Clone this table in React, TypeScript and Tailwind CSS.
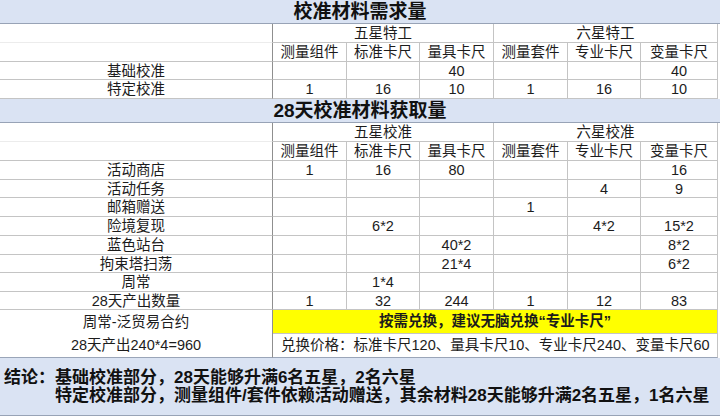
import React from "react";

const grid = "grid grid-cols-[273px_74px_73px_74px_74px_73px_77px] w-[718px]";
const line = "border-[#c4c4c4]";

type Val = string;

function Band({ title }: { title: string }) {
  return (
    <div className="h-[24px] bg-[#dae3f3] border-b border-[#98a3b6] flex items-center justify-center text-[19px] font-bold text-[#111] leading-none">
      {title}
    </div>
  );
}

function Cell({ children, className = "" }: { children?: React.ReactNode; className?: string }) {
  return (
    <div className={`flex items-center justify-center border-r border-b ${line} pt-[1px] ${className}`}>
      {children}
    </div>
  );
}

function Row({ label, vals, h = "h-[19px]" }: { label: string; vals: Val[]; h?: string }) {
  return (
    <div className={`${grid} ${h}`}>
      <Cell className="border-r-[#8f8f8f]">{label}</Cell>
      {vals.map((v, i) => (
        <Cell key={i}>{v}</Cell>
      ))}
    </div>
  );
}

function GroupHeader({ left, right }: { left: string; right: string }) {
  return (
    <>
      <div className={`${grid} h-[19px]`}>
        <div className="border-r border-b border-r-[#8f8f8f] border-b-[#ececec]" />
        <Cell className="col-span-3">{left}</Cell>
        <Cell className="col-span-3">{right}</Cell>
      </div>
      <Row label="" vals={["测量组件", "标准卡尺", "量具卡尺", "测量套件", "专业卡尺", "变量卡尺"]} />
    </>
  );
}

export default function App() {
  return (
    <div className="w-[720px] h-[419px] bg-white text-[#1c1c1c] text-[14.5px] leading-none font-['Liberation_Sans','Noto_Sans_CJK_SC',sans-serif] overflow-hidden">
      <Band title="校准材料需求量" />
      <div className={`${grid} h-[19px]`}>
        <div className="border-r border-b border-r-[#8f8f8f] border-b-[#ececec]" />
        <Cell className="col-span-3">五星特工</Cell>
        <Cell className="col-span-3">六星特工</Cell>
      </div>
      <Row label="" vals={["测量组件", "标准卡尺", "量具卡尺", "测量套件", "专业卡尺", "变量卡尺"]} />
      <Row label="基础校准" h="h-[18px]" vals={["", "", "40", "", "", "40"]} />
      <Row label="特定校准" vals={["1", "16", "10", "1", "16", "10"]} />

      <Band title="28天校准材料获取量" />
      <GroupHeader left="五星校准" right="六星校准" />
      <Row label="活动商店" vals={["1", "16", "80", "", "", "16"]} />
      <Row label="活动任务" h="h-[18px]" vals={["", "", "", "", "4", "9"]} />
      <Row label="邮箱赠送" vals={["", "", "", "1", "", ""]} />
      <Row label="险境复现" vals={["", "6*2", "", "", "4*2", "15*2"]} />
      <Row label="蓝色站台" vals={["", "", "40*2", "", "", "8*2"]} />
      <Row label="拘束塔扫荡" h="h-[18px]" vals={["", "", "21*4", "", "", "6*2"]} />
      <Row label="周常" vals={["", "1*4", "", "", "", ""]} />
      <Row label="28天产出数量" h="h-[18px]" vals={["1", "32", "244", "1", "12", "83"]} />

      <div className={`${grid} h-[24px]`}>
        <div className="flex items-center justify-center border-r border-r-[#8f8f8f]">周常-泛贸易合约</div>
        <div className={`col-span-6 flex items-center justify-center bg-[#ffff00] font-bold border-r border-b ${line}`}>
          按需兑换，建议无脑兑换“专业卡尺”
        </div>
      </div>
      <div className={`${grid} h-[24px]`}>
        <div className="flex items-center justify-center border-r border-b border-r-[#8f8f8f] border-b-[#9aa5b8]">
          28天产出240*4=960
        </div>
        <div className="col-span-6 flex items-center pl-[8px] border-r border-b border-r-[#c4c4c4] border-b-[#9aa5b8]">
          兑换价格：标准卡尺120、量具卡尺10、专业卡尺240、变量卡尺60
        </div>
      </div>

      <div className="h-[58px] bg-[#dae3f3] border-b border-[#98a3b6] flex items-start pt-[11px] pl-[4px] text-[17px] font-bold text-[#111] leading-[18px]">
        <span>结论：</span>
        <div className="flex flex-col">
          <span>基础校准部分，28天能够升满6名五星，2名六星</span>
          <span>特定校准部分，测量组件/套件依赖活动赠送，其余材料28天能够升满2名五星，1名六星</span>
        </div>
      </div>
    </div>
  );
}
